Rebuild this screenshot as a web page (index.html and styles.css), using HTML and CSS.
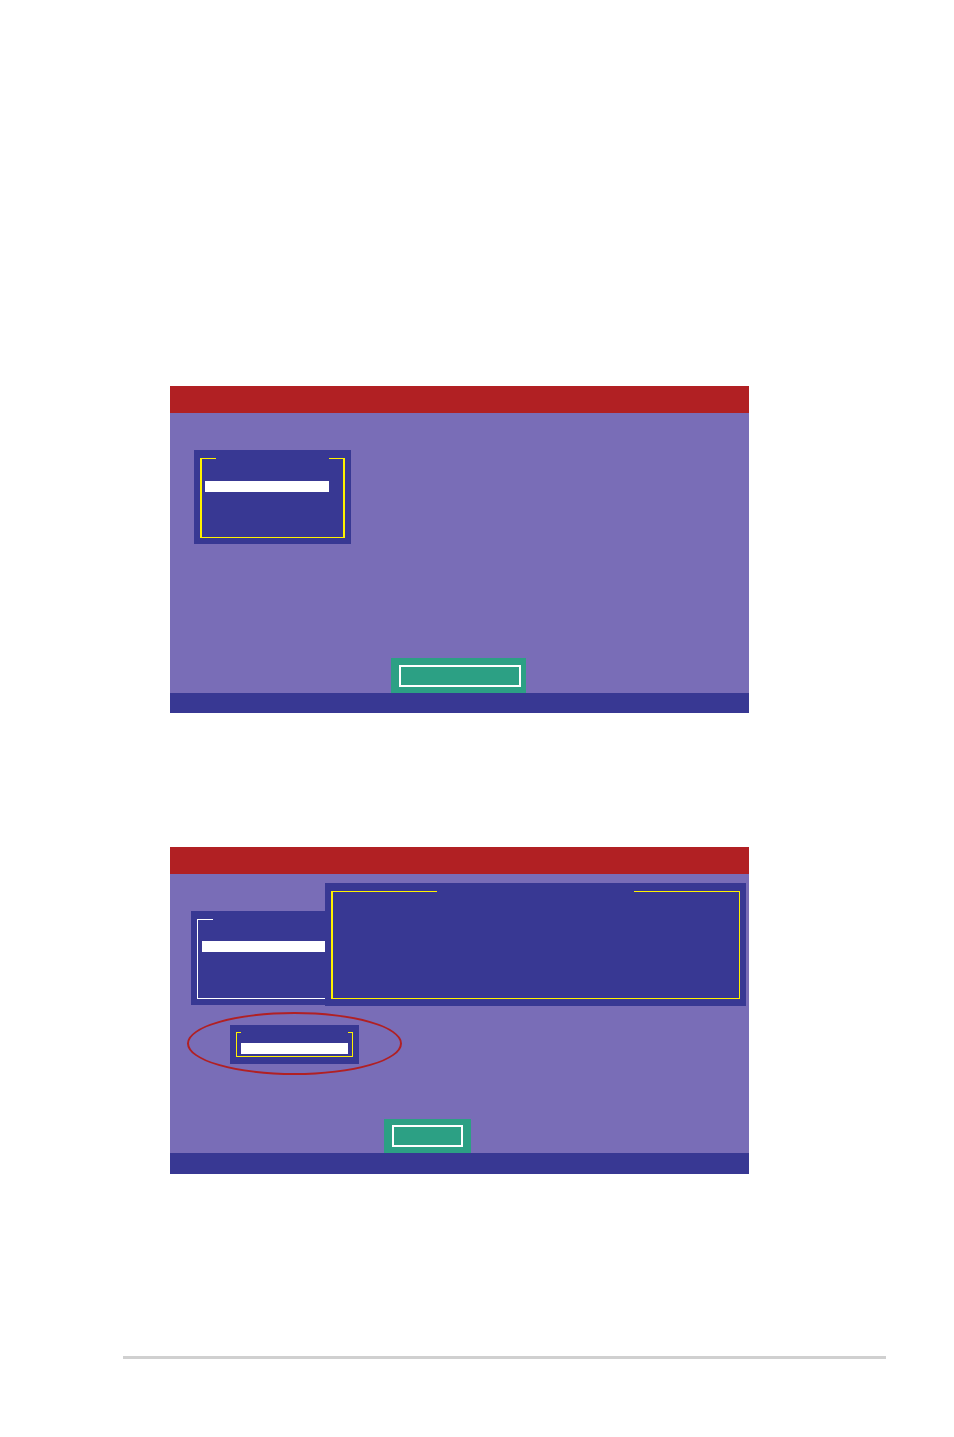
FILE: index.html
```html
<!DOCTYPE html>
<html>
<head>
<meta charset="utf-8">
<link rel="stylesheet" href="styles.css">
</head>
<body>
<div class="page">
  <div class="screen screen-one">
    <div class="screen-header"></div>
    <div class="screen-body body-one">
      <div class="panel panel-main">
        <div class="frame frame-yellow frame-main">
          <div class="bar bar-main"></div>
        </div>
      </div>
      <div class="button button-wide">
        <div class="button-frame"></div>
      </div>
    </div>
    <div class="screen-footer"></div>
  </div>

  <div class="screen screen-two">
    <div class="screen-header"></div>
    <div class="screen-body body-two">
      <div class="panel panel-behind">
        <div class="frame frame-white">
          <div class="bar bar-behind"></div>
        </div>
      </div>
      <div class="panel panel-small">
        <div class="frame frame-yellow frame-small">
          <div class="bar bar-small"></div>
        </div>
      </div>
      <div class="button button-narrow">
        <div class="button-frame"></div>
      </div>
      <div class="popup">
        <div class="frame frame-yellow frame-popup"></div>
      </div>
      <div class="highlight-oval"></div>
    </div>
    <div class="screen-footer footer-two"></div>
  </div>

  <div class="page-rule"></div>
</div>
</body>
</html>
```

FILE: styles.css
```css
html, body {
  margin: 0;
  padding: 0;
  background: #ffffff;
  font-family: "Liberation Sans", Arial, sans-serif;
}

.page {
  width: 954px;
  height: 1437px;
  padding-top: 386px;
  box-sizing: border-box;
}

.screen {
  margin-left: 170px;
  width: 579px;
}

.screen-two {
  margin-top: 134px;
}

.screen-header {
  height: 27px;
  background: #b12023;
}

.screen-body {
  background: #796db7;
  box-sizing: border-box;
  display: flex;
  flex-direction: column;
  align-items: flex-start;
}

.body-one {
  height: 280px;
  padding: 37px 0 0 24px;
}

.body-two {
  height: 279px;
  padding: 37px 0 0 21px;
  position: relative;
}

.screen-footer {
  height: 20px;
  background: #383893;
}

.footer-two {
  height: 21px;
}

.panel {
  background: #383893;
  box-sizing: border-box;
}

.panel-main,
.panel-behind {
  width: 157px;
  height: 94px;
  padding: 8px 6px 6px 6px;
}

.panel-small {
  width: 129px;
  height: 39px;
  padding: 7px 6px 7px 6px;
  margin: 20px 0 0 39px;
}

.frame {
  position: relative;
  height: 100%;
  box-sizing: border-box;
}

.frame::before,
.frame::after {
  content: "";
  position: absolute;
  top: 0;
  height: 1px;
}

.frame-yellow {
  border-left: 2px solid #fff200;
  border-right: 2px solid #fff200;
  border-bottom: 1px solid #fff200;
}

.frame-yellow::before,
.frame-yellow::after {
  background: #fff200;
}

.frame-main {
  padding: 23px 0 0 3px;
}

.frame-main::before {
  left: -2px;
  width: 16px;
}

.frame-main::after {
  right: -2px;
  width: 16px;
}

.frame-white {
  border-left: 1px solid #ffffff;
  border-right: 1px solid #ffffff;
  border-bottom: 1px solid #ffffff;
  padding: 22px 0 0 4px;
}

.frame-white::before {
  left: -1px;
  width: 16px;
  background: #ffffff;
}

.frame-small {
  border-width: 1px;
  padding: 11px 0 0 4px;
}

.frame-small::before {
  left: -1px;
  width: 5px;
}

.frame-small::after {
  right: -1px;
  width: 5px;
}

.frame-popup {
  border-right-width: 1px;
}

.frame-popup::before {
  left: -2px;
  width: 106px;
}

.frame-popup::after {
  right: -1px;
  width: 106px;
}

.bar {
  background: #ffffff;
  height: 11px;
}

.bar-main {
  width: 124px;
}

.bar-behind {
  width: 130px;
}

.bar-small {
  width: 107px;
}

.button {
  background: #2ca084;
  box-sizing: border-box;
  margin-top: auto;
}

.button-frame {
  height: 100%;
  border: 2px solid #ffffff;
  box-sizing: border-box;
}

.button-wide {
  width: 135px;
  height: 35px;
  padding: 7px 5px 6px 8px;
  margin-left: 197px;
}

.button-narrow {
  width: 87px;
  height: 34px;
  padding: 6px 8px 6px 8px;
  margin-left: 193px;
}

.popup {
  position: absolute;
  left: 155px;
  top: 9px;
  width: 421px;
  height: 123px;
  background: #383893;
  padding: 8px 6px 7px 6px;
  box-sizing: border-box;
}

.highlight-oval {
  position: absolute;
  left: 17px;
  top: 138px;
  width: 215px;
  height: 63px;
  border: 2px solid #b12023;
  border-radius: 50%;
  box-sizing: border-box;
}

.page-rule {
  margin: 182px 0 0 123px;
  width: 763px;
  height: 3px;
  background: #d0d0d0;
}
```
